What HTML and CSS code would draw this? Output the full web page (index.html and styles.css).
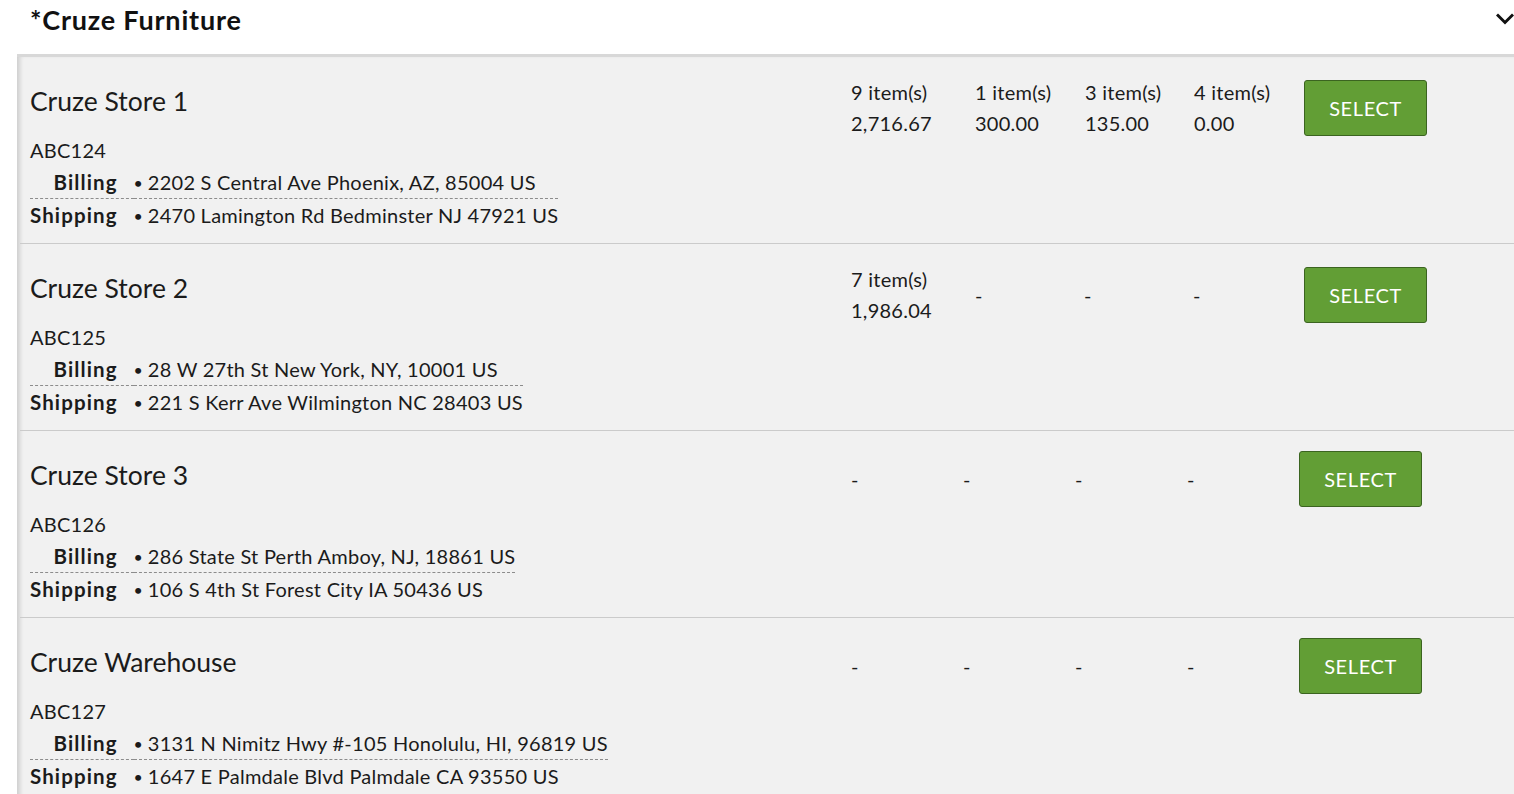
FILE: index.html
```html
<!DOCTYPE html>
<html lang="en">
<head>
<meta charset="utf-8">
<title>Cruze Furniture</title>
<link rel="stylesheet" href="styles.css">
</head>
<body>
<section class="account">
  <header class="account-header">
    <h2 class="account-title">*Cruze Furniture</h2>
    <svg class="chevron" width="18" height="12" viewBox="0 0 18 12" aria-hidden="true"><path d="M2 2.5 L9 9.5 L16 2.5" fill="none" stroke="#111" stroke-width="3" stroke-linecap="square"/></svg>
  </header>
  <div class="locations">
    <div class="location">
      <div class="loc-info">
        <div class="loc-name">Cruze Store 1</div>
        <div class="loc-code">ABC124</div>
        <table class="addr">
          <tr class="addr-billing"><th>Billing</th><td><span class="bullet">•</span>2202 S Central Ave Phoenix, AZ, 85004 US</td></tr>
          <tr class="addr-shipping"><th>Shipping</th><td><span class="bullet">•</span>2470 Lamington Rd Bedminster NJ 47921 US</td></tr>
        </table>
      </div>
      <div class="loc-stats">
        <div class="stat"><div>9 item(s)</div><div>2,716.67</div></div>
        <div class="stat"><div>1 item(s)</div><div>300.00</div></div>
        <div class="stat"><div>3 item(s)</div><div>135.00</div></div>
        <div class="stat"><div>4 item(s)</div><div>0.00</div></div>
        <button class="btn-select" type="button">Select</button>
      </div>
    </div>
    <div class="location">
      <div class="loc-info">
        <div class="loc-name">Cruze Store 2</div>
        <div class="loc-code">ABC125</div>
        <table class="addr">
          <tr class="addr-billing"><th>Billing</th><td><span class="bullet">•</span>28 W 27th St New York, NY, 10001 US</td></tr>
          <tr class="addr-shipping"><th>Shipping</th><td><span class="bullet">•</span>221 S Kerr Ave Wilmington NC 28403 US</td></tr>
        </table>
      </div>
      <div class="loc-stats loc-stats-mixed">
        <div class="stat"><div>7 item(s)</div><div>1,986.04</div></div>
        <div class="stat stat-empty">-</div>
        <div class="stat stat-empty">-</div>
        <div class="stat stat-empty">-</div>
        <button class="btn-select" type="button">Select</button>
      </div>
    </div>
    <div class="location">
      <div class="loc-info">
        <div class="loc-name">Cruze Store 3</div>
        <div class="loc-code">ABC126</div>
        <table class="addr">
          <tr class="addr-billing"><th>Billing</th><td><span class="bullet">•</span>286 State St Perth Amboy, NJ, 18861 US</td></tr>
          <tr class="addr-shipping"><th>Shipping</th><td><span class="bullet">•</span>106 S 4th St Forest City IA 50436 US</td></tr>
        </table>
      </div>
      <div class="loc-stats loc-stats-empty">
        <div class="stat stat-empty">-</div>
        <div class="stat stat-empty">-</div>
        <div class="stat stat-empty">-</div>
        <div class="stat stat-empty">-</div>
        <button class="btn-select" type="button">Select</button>
      </div>
    </div>
    <div class="location">
      <div class="loc-info">
        <div class="loc-name">Cruze Warehouse</div>
        <div class="loc-code">ABC127</div>
        <table class="addr">
          <tr class="addr-billing"><th>Billing</th><td><span class="bullet">•</span>3131 N Nimitz Hwy #-105 Honolulu, HI, 96819 US</td></tr>
          <tr class="addr-shipping"><th>Shipping</th><td><span class="bullet">•</span>1647 E Palmdale Blvd Palmdale CA 93550 US</td></tr>
        </table>
      </div>
      <div class="loc-stats loc-stats-empty">
        <div class="stat stat-empty">-</div>
        <div class="stat stat-empty">-</div>
        <div class="stat stat-empty">-</div>
        <div class="stat stat-empty">-</div>
        <button class="btn-select" type="button">Select</button>
      </div>
    </div>
  </div>
</section>
</body>
</html>
```

FILE: styles.css
```css
* { box-sizing: border-box; }

html, body {
  margin: 0;
  padding: 0;
  background: #ffffff;
  overflow: hidden;
}

body {
  font-family: Lato, "Noto Sans", "Liberation Sans", sans-serif;
  font-size: 20px;
  letter-spacing: 0.25px;
  color: #1b1b1b;
}

.account {
  margin-left: 17px;
}

.account-header {
  display: flex;
  justify-content: space-between;
  align-items: flex-start;
  height: 54px;
  padding: 4px 0 0 13px;
}

.account-title {
  margin: 0;
  font-size: 27px;
  line-height: 32px;
  font-weight: 700;
  letter-spacing: 0.8px;
  color: #111;
}

.chevron {
  margin-top: 9px;
  margin-right: 0;
}

.locations {
  background: #f1f1f1;
  border-top: 3px solid #d8d8d8;
  box-shadow: inset 5px 0 4px -2px rgba(0, 0, 0, 0.14);
}

.location {
  display: flex;
  align-items: flex-start;
  padding: 0 0 12px 10px;
  margin-left: 3px;
  border-bottom: 1px solid #cbcbcb;
}

.loc-info {
  flex: 0 0 821px;
  padding-top: 27px;
}

.loc-name {
  font-size: 26.5px;
  line-height: 34px;
  letter-spacing: 0;
  margin-bottom: 16px;
}

.loc-code {
  line-height: 32px;
}

.addr {
  border-collapse: collapse;
}

.addr th,
.addr td {
  padding: 1px 0;
  line-height: 30px;
  white-space: nowrap;
}

.addr th {
  text-align: right;
  font-weight: 700;
  font-size: 20.5px;
  letter-spacing: 1.1px;
  padding-right: 16px;
}

.addr td {
  text-align: left;
}

.bullet {
  font-size: 16px;
  line-height: 1;
  margin-right: 5px;
  letter-spacing: 0;
  vertical-align: 1px;
}

.addr-billing th,
.addr-billing td {
  border-bottom: 1px dashed #8c8c8c;
}

.loc-stats {
  display: grid;
  grid-template-columns: 124px 110px 109px 110px auto;
  align-items: center;
  padding-top: 20px;
}

.loc-stats-mixed {
  grid-template-columns: 124px 109px 109px 111px auto;
}

.loc-stats-empty {
  grid-template-columns: 112px 112px 112px 112px auto;
}

.stat {
  line-height: 31px;
  white-space: nowrap;
}

.btn-select {
  width: 123px;
  height: 56px;
  padding: 0;
  border: 1px solid #3b6420;
  border-radius: 3px;
  background: #629e35;
  color: #ffffff;
  font-family: inherit;
  font-size: 20px;
  letter-spacing: 0.6px;
  text-transform: uppercase;
  cursor: pointer;
}
```
